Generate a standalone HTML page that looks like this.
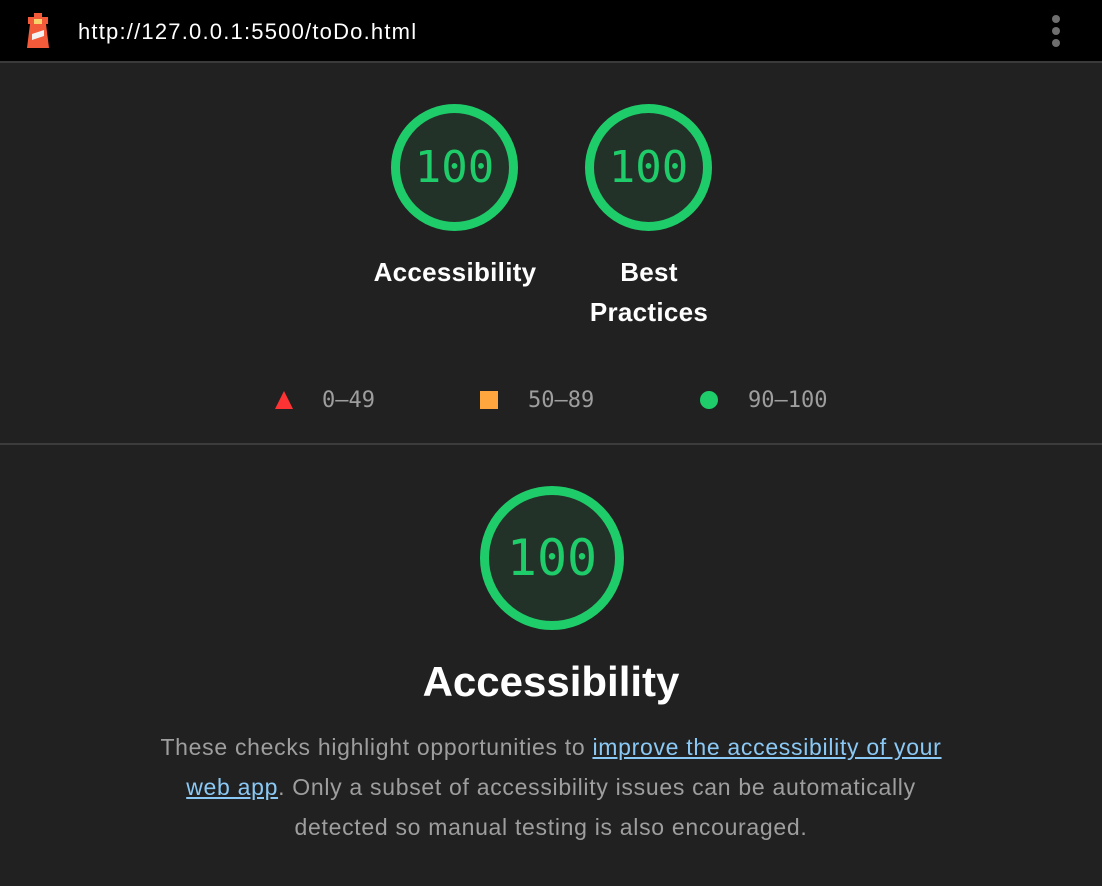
<!DOCTYPE html>
<html><head><meta charset="utf-8"><style>
*{margin:0;padding:0;box-sizing:border-box}
body{width:1102px;height:886px;background:#212121;font-family:"Liberation Sans",sans-serif;position:relative;overflow:hidden}
.top{position:absolute;left:0;top:0;width:1102px;height:63px;background:#000;border-bottom:2px solid #3a3a3a}
.url{position:absolute;left:78px;top:19px;color:#fff;font-size:22px;letter-spacing:1.2px}
.dot{position:absolute;left:1052px;width:8px;height:8px;border-radius:50%;background:#6e6e6e}
.g{position:absolute;border-radius:50%;border:9px solid #1ecc6a;background:#233228;color:#1ecc6a;font-family:"DejaVu Sans Mono",monospace;display:flex;align-items:center;justify-content:center}
.lab{position:absolute;color:#fff;font-weight:bold;font-size:26px;letter-spacing:0.3px;line-height:40px;text-align:center;width:220px}
.leg{position:absolute;top:388px;color:#9e9e9e;font-family:"DejaVu Sans Mono",monospace;font-size:22px}
.sep{position:absolute;left:0;top:443px;width:1102px;height:2px;background:#3c3c3c}
.desc{position:absolute;left:0;width:1102px;top:727px;text-align:center;color:#9e9e9e;font-size:23px;line-height:40px;letter-spacing:0.7px;white-space:nowrap}
.desc a{color:#8ac9f5;text-decoration:underline}
</style></head><body>
<div class="top">
<svg style="position:absolute;left:25px;top:13px" width="26" height="36" viewBox="0 0 26 36">
<rect x="9" y="0" width="8" height="5" fill="#f25a3a"/>
<rect x="3" y="4" width="20" height="7" fill="#f25a3a"/>
<rect x="9" y="6" width="8" height="5" fill="#f6d36b"/>
<polygon points="5,11 21,11 24,35 2,35" fill="#f25a3a"/>
<polygon points="7,21 19,17 19,23 7,27" fill="#f2f2f2"/>
</svg>
<div class="url">http://127.0.0.1:5500/toDo.html</div>
<div class="dot" style="top:15px"></div><div class="dot" style="top:27px"></div><div class="dot" style="top:39px"></div>
</div>
<div class="g" style="left:391px;top:104px;width:127px;height:127px;font-size:44px">100</div>
<div class="g" style="left:585px;top:104px;width:127px;height:127px;font-size:44px">100</div>
<div class="lab" style="left:345px;top:252px">Accessibility</div>
<div class="lab" style="left:539px;top:252px">Best<br>Practices</div>
<svg style="position:absolute;left:274px;top:390px" width="20" height="20"><polygon points="10,1 19,19 1,19" fill="#f33"/></svg>
<div style="position:absolute;left:480px;top:391px;width:18px;height:18px;background:#ffa63f"></div>
<div style="position:absolute;left:700px;top:391px;width:18px;height:18px;border-radius:50%;background:#1ecc6a"></div>
<div class="leg" style="left:322px">0–49</div>
<div class="leg" style="left:528px">50–89</div>
<div class="leg" style="left:748px">90–100</div>
<div class="sep"></div>
<div class="g" style="left:480px;top:486px;width:144px;height:144px;font-size:50px">100</div>
<div style="position:absolute;left:0;width:1102px;top:658px;text-align:center;color:#fff;font-size:42px;font-weight:bold">Accessibility</div>
<div class="desc">These checks highlight opportunities to <a>improve the accessibility of your</a><br><a>web app</a>. Only a subset of accessibility issues can be automatically<br>detected so manual testing is also encouraged.</div>
</body></html>
